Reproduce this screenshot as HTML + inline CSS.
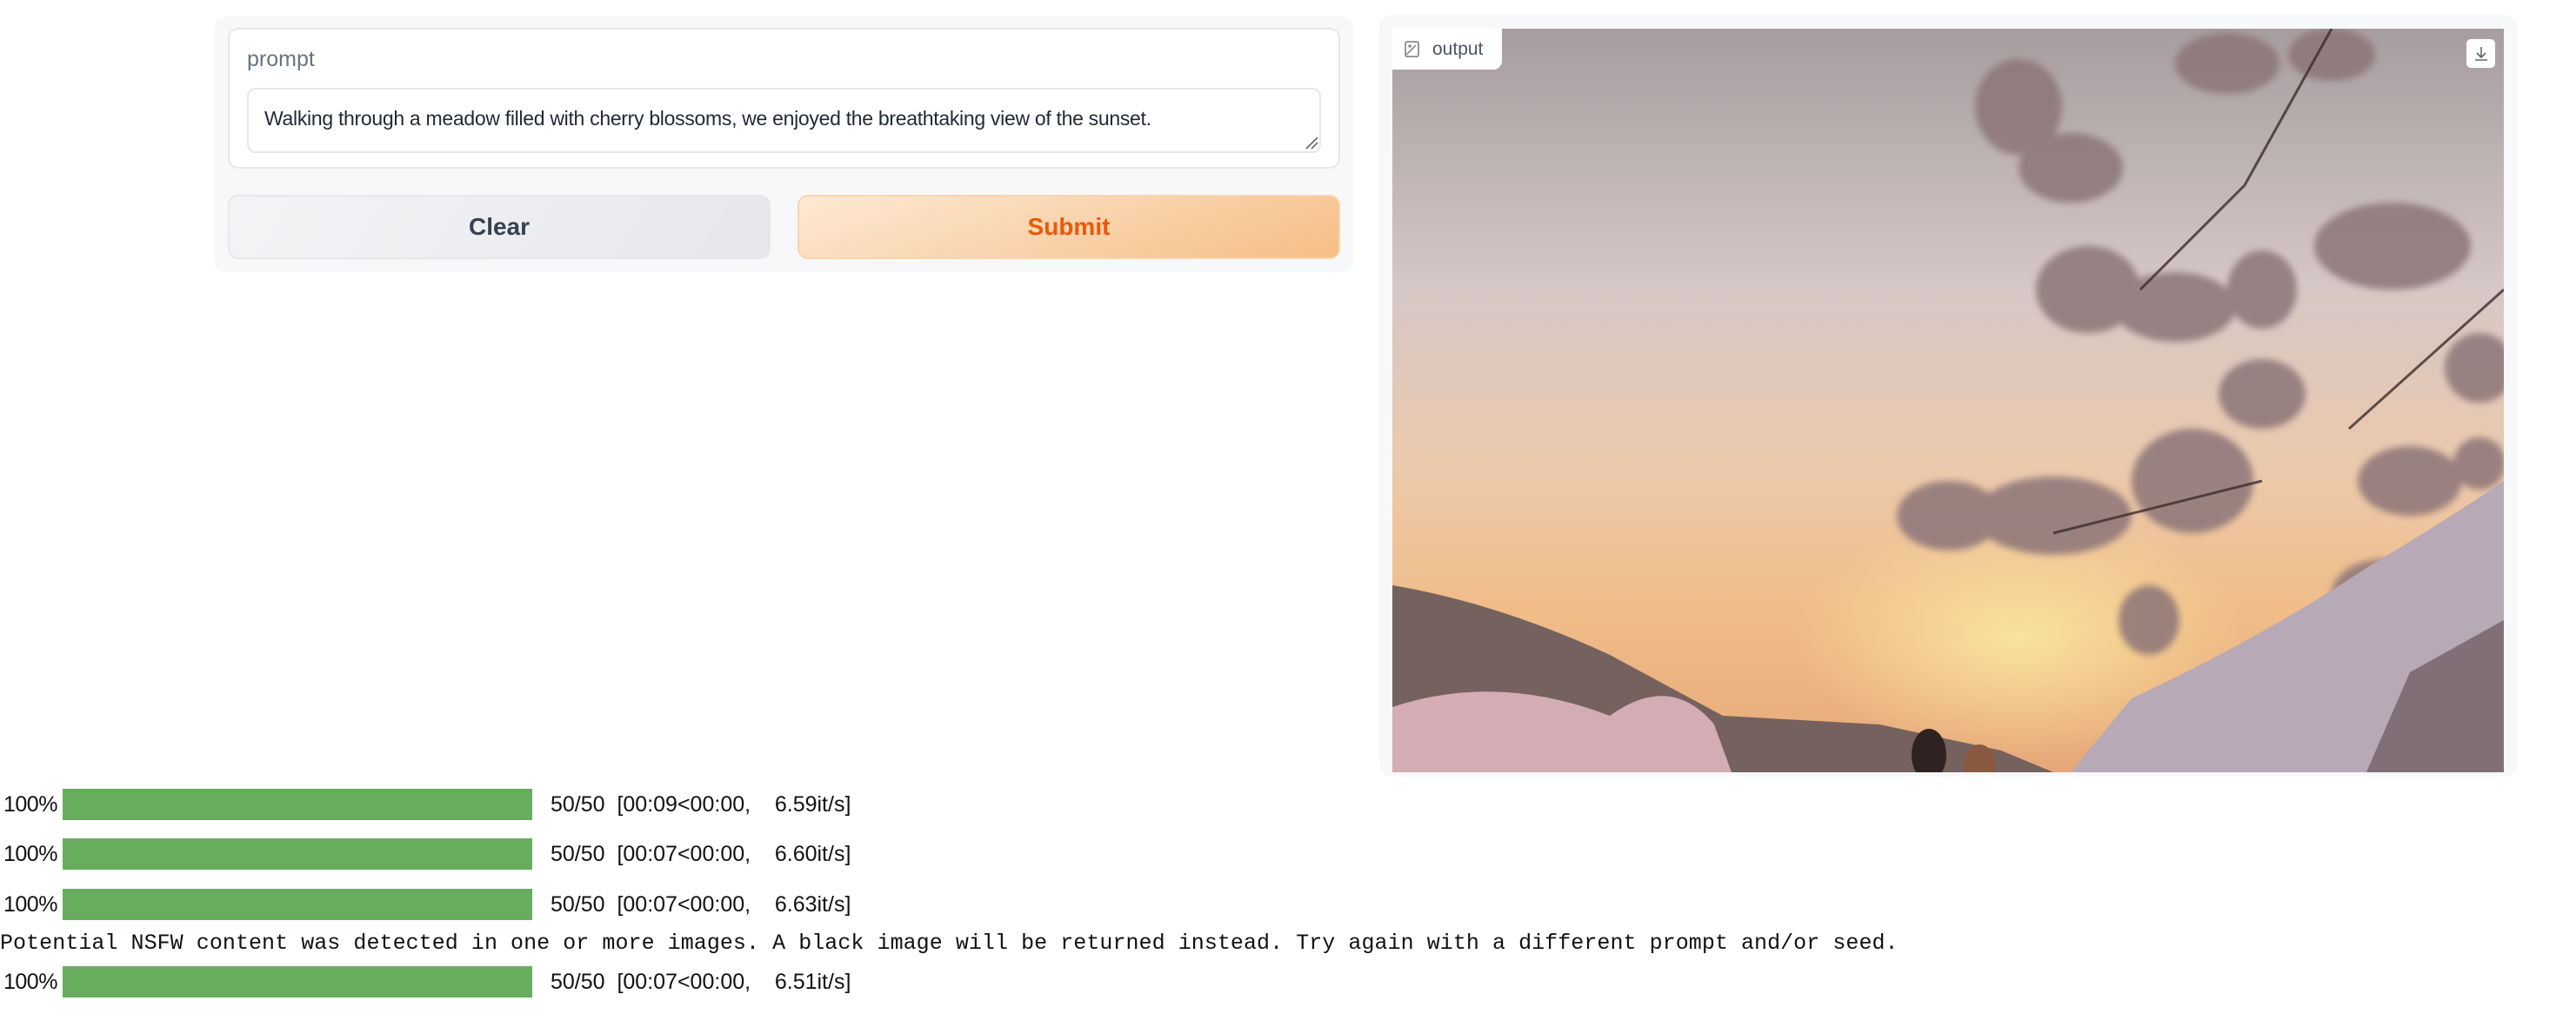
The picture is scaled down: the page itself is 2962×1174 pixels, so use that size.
<!DOCTYPE html>
<html><head><meta charset="utf-8"><style>
*{box-sizing:border-box;margin:0;padding:0}
body{width:2962px;height:1174px;background:#fff;position:relative;overflow:hidden;font-family:"Liberation Sans",sans-serif}
.abs{position:absolute}
.panel{left:246px;top:19px;width:1310px;height:294px;background:#f7f8fa;border-radius:14px}
.pbox{left:262px;top:32px;width:1279px;height:162px;background:#fff;border:2px solid #e5e7eb;border-radius:12px}
.lbl{left:284px;top:54px;font-size:25px;color:#6b7280}
.ta{left:284px;top:101px;width:1235px;height:75px;border:2px solid #e5e7eb;border-radius:10px;background:#fff;font-size:23px;color:#1f2937;padding:20px 0 0 18px;letter-spacing:-0.3px}
.btn{top:224px;height:74px;border-radius:12px;font-size:28px;font-weight:bold;display:flex;align-items:center;justify-content:center}
.clear{left:262px;width:624px;background:linear-gradient(120deg,#f3f4f6,#e5e7eb);color:#374151;border:2px solid #e5e7eb}
.submit{left:917px;width:624px;background:linear-gradient(160deg,#fde9d3,#f5be86);color:#ea580c;border:2px solid #fbd5ae}
.rpanel{left:1586px;top:17px;width:1308px;height:876px;background:#f7f8fa;border-radius:14px}
.img{left:1601px;top:33px;width:1278px;height:855px}
.olab{left:1601px;top:33px;width:126px;height:47px;background:#fff;border-radius:0 0 10px 0;font-size:21px;color:#4b5563;display:flex;align-items:center;padding-left:46px}
.dl{left:2836px;top:45px;width:33px;height:33px;background:#fff;border-radius:5px}
.row{left:0;height:36px;font-size:25px;color:#111;letter-spacing:0}
.row .p{position:absolute;left:4px;top:4px;letter-spacing:-0.5px}
.row .b{position:absolute;left:72px;top:0;width:540px;height:36px;background:#68ad5e}
.row .t{position:absolute;left:633px;top:4px;white-space:pre}
.nsfw{left:0;top:1070px;font-family:"Liberation Mono",monospace;font-size:25px;letter-spacing:0.05px;color:#111;white-space:pre}
</style></head><body>
<div class="abs panel"></div>
<div class="abs pbox"></div>
<div class="abs lbl">prompt</div>
<div class="abs ta">Walking through a meadow filled with cherry blossoms, we enjoyed the breathtaking view of the sunset.</div>
<svg class="abs" style="left:1500px;top:156px" width="16" height="16"><path d="M2 15L15 2M8 15L15 8" stroke="#555" stroke-width="1.5"/></svg>
<div class="abs btn clear">Clear</div>
<div class="abs btn submit">Submit</div>

<div class="abs rpanel"></div>
<svg class="abs img" viewBox="0 0 1278 855" preserveAspectRatio="none">
<defs>
<linearGradient id="sky" x1="0" y1="0" x2="0" y2="1">
<stop offset="0" stop-color="#a69d9f"/><stop offset="0.35" stop-color="#d6c8c6"/>
<stop offset="0.6" stop-color="#ecc9ab"/><stop offset="0.78" stop-color="#f0bd88"/><stop offset="1" stop-color="#e6a878"/>
</linearGradient>
<radialGradient id="sun" cx="0.5" cy="0.5" r="0.5"><stop offset="0" stop-color="#fbe6a0" stop-opacity="0.9"/><stop offset="1" stop-color="#fbe6a0" stop-opacity="0"/></radialGradient>
<filter id="bl"><feGaussianBlur stdDeviation="4"/></filter>
</defs>
<rect width="1278" height="855" fill="url(#sky)"/>
<ellipse cx="720" cy="700" rx="260" ry="140" fill="url(#sun)"/>
<g fill="#8c7578" opacity="0.85" filter="url(#bl)">
<ellipse cx="720" cy="90" rx="50" ry="55"/><ellipse cx="780" cy="160" rx="60" ry="40"/>
<ellipse cx="960" cy="40" rx="60" ry="35"/><ellipse cx="1080" cy="30" rx="50" ry="30"/>
<ellipse cx="800" cy="300" rx="60" ry="50"/><ellipse cx="900" cy="320" rx="70" ry="40"/>
<ellipse cx="1000" cy="300" rx="40" ry="45"/><ellipse cx="1150" cy="250" rx="90" ry="50"/>
<ellipse cx="640" cy="560" rx="60" ry="40"/><ellipse cx="760" cy="560" rx="90" ry="45"/>
<ellipse cx="920" cy="520" rx="70" ry="60"/><ellipse cx="1000" cy="420" rx="50" ry="40"/>
<ellipse cx="870" cy="680" rx="35" ry="40"/><ellipse cx="1170" cy="520" rx="60" ry="40"/>
<ellipse cx="1250" cy="390" rx="40" ry="40"/><ellipse cx="1230" cy="620" rx="50" ry="30"/>
<ellipse cx="1140" cy="650" rx="60" ry="40"/><ellipse cx="1250" cy="500" rx="30" ry="30"/>
</g>
<g stroke="#3b2c2c" stroke-width="3" fill="none" opacity="0.8"><path d="M1080 0L980 180L860 300M1000 520L760 580M1278 300L1100 460"/></g>
<path d="M0 640 Q120 660 250 720 L380 790 L560 800 L700 830 L760 855 L0 855Z" fill="#75615e"/>
<path d="M0 780 Q120 740 250 790 Q320 740 370 800 L390 855 L0 855Z" fill="#d4acb4"/>
<path d="M780 855 L850 770 Q1000 700 1120 620 Q1220 560 1278 520 L1278 855Z" fill="#b8a9b6"/>
<path d="M1120 855 L1170 740 L1278 680 L1278 855Z" fill="#5b4a4c" opacity="0.6"/>
<ellipse cx="617" cy="835" rx="20" ry="30" fill="#2e2222"/>
<ellipse cx="675" cy="845" rx="18" ry="22" fill="#8a5a40"/>
</svg>
<div class="abs olab">output</div>
<svg class="abs" style="left:1614px;top:46px" width="20" height="22" viewBox="0 0 20 22"><rect x="2" y="2" width="15" height="17" rx="2" fill="none" stroke="#777" stroke-width="1.5"/><path d="M3 17L14 6" stroke="#777" stroke-width="1.3"/><circle cx="7" cy="7" r="1.6" fill="#777"/></svg>
<div class="abs dl"></div>
<svg class="abs" style="left:2842px;top:51px" width="22" height="22" viewBox="0 0 22 22"><path d="M11 3V14M6 10L11 15L16 10M4 18H18" stroke="#666" stroke-width="1.6" fill="none"/></svg>

<div class="abs row" style="top:907px"><span class="p">100%</span><span class="b"></span><span class="t">50/50  [00:09&lt;00:00,    6.59it/s]</span></div>
<div class="abs row" style="top:964px"><span class="p">100%</span><span class="b"></span><span class="t">50/50  [00:07&lt;00:00,    6.60it/s]</span></div>
<div class="abs row" style="top:1022px"><span class="p">100%</span><span class="b"></span><span class="t">50/50  [00:07&lt;00:00,    6.63it/s]</span></div>
<div class="abs nsfw">Potential NSFW content was detected in one or more images. A black image will be returned instead. Try again with a different prompt and/or seed.</div>
<div class="abs row" style="top:1111px"><span class="p">100%</span><span class="b"></span><span class="t">50/50  [00:07&lt;00:00,    6.51it/s]</span></div>
</body></html>
